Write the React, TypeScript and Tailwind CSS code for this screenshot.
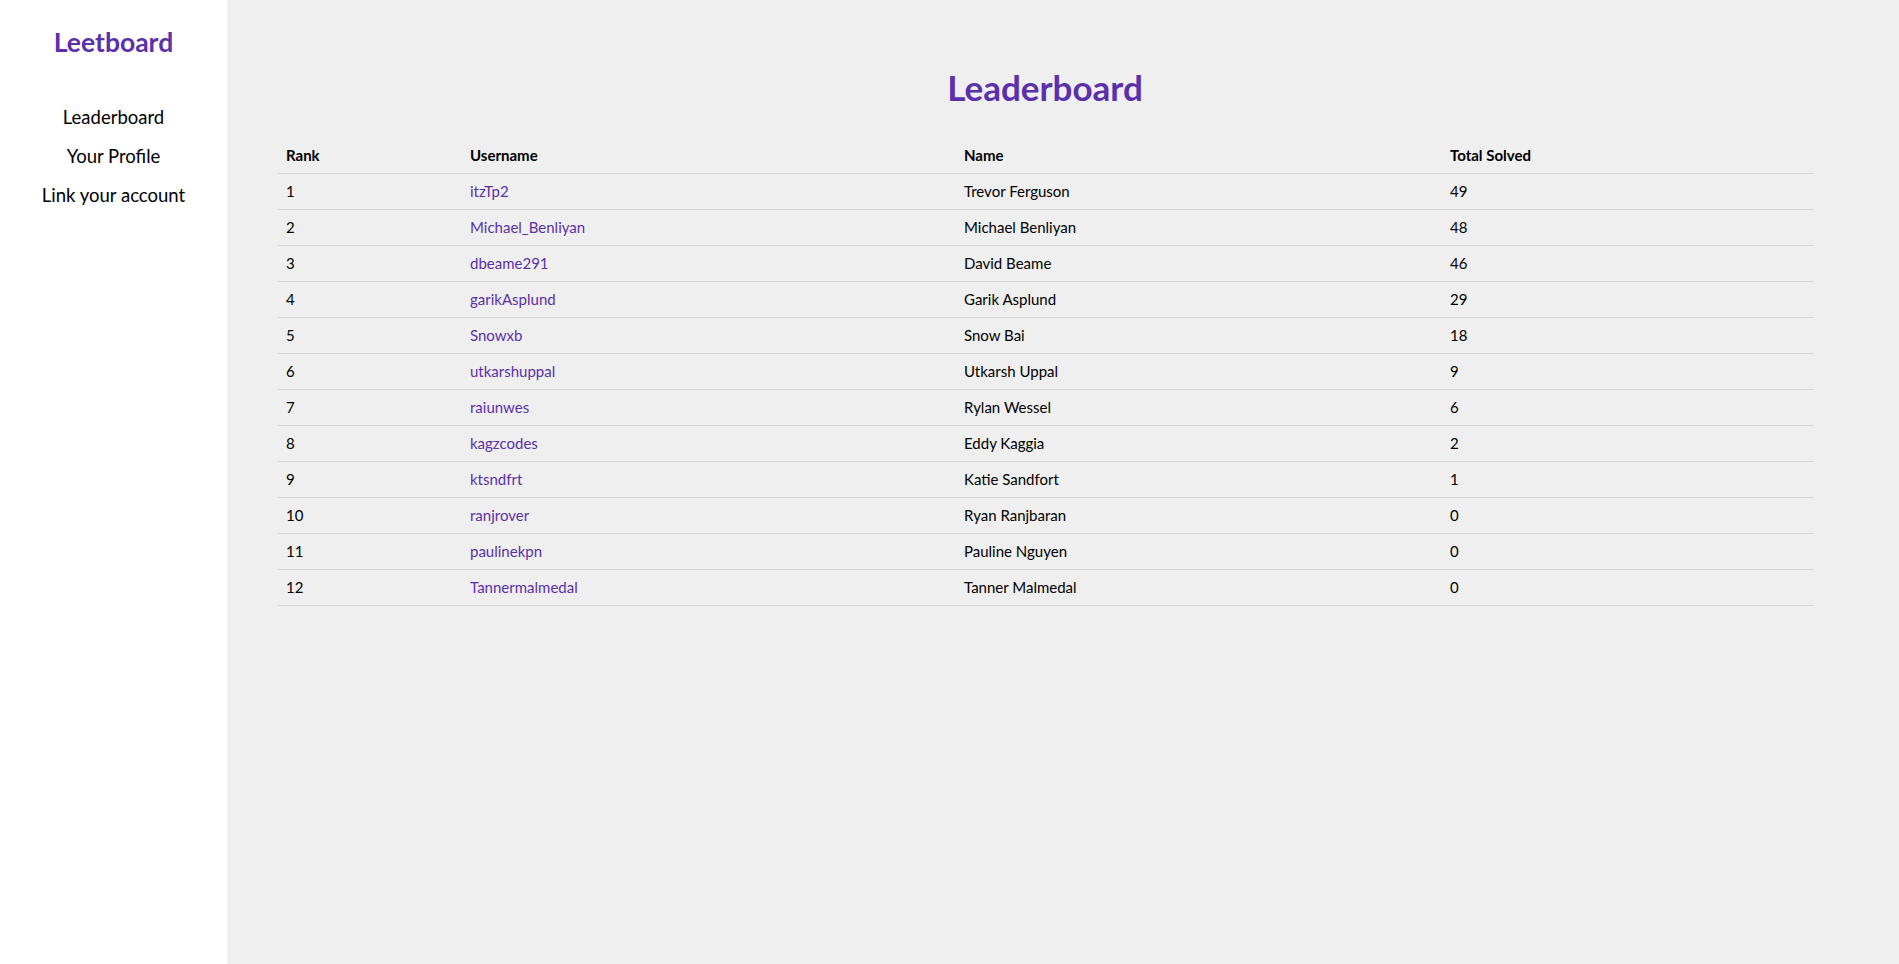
const rows = [
  { rank: 1, user: 'itzTp2', name: 'Trevor Ferguson', solved: 49 },
  { rank: 2, user: 'Michael_Benliyan', name: 'Michael Benliyan', solved: 48 },
  { rank: 3, user: 'dbeame291', name: 'David Beame', solved: 46 },
  { rank: 4, user: 'garikAsplund', name: 'Garik Asplund', solved: 29 },
  { rank: 5, user: 'Snowxb', name: 'Snow Bai', solved: 18 },
  { rank: 6, user: 'utkarshuppal', name: 'Utkarsh Uppal', solved: 9 },
  { rank: 7, user: 'raiunwes', name: 'Rylan Wessel', solved: 6 },
  { rank: 8, user: 'kagzcodes', name: 'Eddy Kaggia', solved: 2 },
  { rank: 9, user: 'ktsndfrt', name: 'Katie Sandfort', solved: 1 },
  { rank: 10, user: 'ranjrover', name: 'Ryan Ranjbaran', solved: 0 },
  { rank: 11, user: 'paulinekpn', name: 'Pauline Nguyen', solved: 0 },
  { rank: 12, user: 'Tannermalmedal', name: 'Tanner Malmedal', solved: 0 },
]

const body = { fontFamily: 'Lato, "Open Sans", sans-serif' }

export default function App() {
  return (
    <div className="flex min-h-screen text-black" style={body}>
      <aside className="w-[227px] shrink-0 bg-white flex flex-col items-center pt-[27px]">
        <h1 className="text-[26.5px] leading-[31px] font-bold text-[#5b30aa]">Leetboard</h1>
        <nav className="mt-[40px] flex flex-col items-center text-[18.5px]">
          <a href="#" className="leading-[39px]">Leaderboard</a>
          <a href="#" className="leading-[39px]">Your Profile</a>
          <a href="#" className="leading-[39px]">Link your account</a>
        </nav>
      </aside>
      <main className="flex-1 bg-[#efefef] pl-[50px] pt-[65px]">
        <div className="w-[1536px]">
          <h2 className="text-center text-[35px] leading-[44px] font-bold text-[#5b30aa]">Leaderboard</h2>
          <table className="mt-[29px] w-full border-collapse text-[15px] text-left">
            <thead>
              <tr className="border-b border-[#d6d6d6]">
                <th className="w-[184px] h-[35px] px-[9px] pb-[1px] font-bold">Rank</th>
                <th className="w-[494px] px-[9px] pb-[1px] font-bold">Username</th>
                <th className="w-[486px] px-[9px] pb-[1px] font-bold">Name</th>
                <th className="px-[9px] pb-[1px] font-bold">Total Solved</th>
              </tr>
            </thead>
            <tbody>
              {rows.map((r) => (
                <tr key={r.rank} className="border-b border-[#d6d6d6]">
                  <td className="h-[36px] px-[9px] pt-[1px]">{r.rank}</td>
                  <td className="px-[9px] pt-[1px]">
                    <a href="#" className="text-[#5b30aa]">{r.user}</a>
                  </td>
                  <td className="px-[9px] pt-[1px]">{r.name}</td>
                  <td className="px-[9px] pt-[1px]">{r.solved}</td>
                </tr>
              ))}
            </tbody>
          </table>
        </div>
      </main>
    </div>
  )
}
